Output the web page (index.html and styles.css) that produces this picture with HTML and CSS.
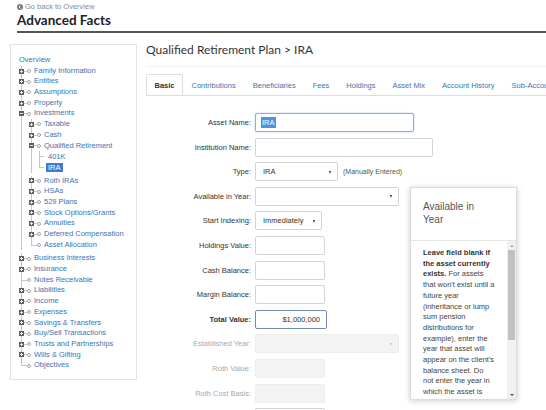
FILE: index.html
```html
<!DOCTYPE html>
<html>
<head>
<meta charset="utf-8">
<link rel="stylesheet" href="styles.css">
</head>
<body>
<div class="top">
  <a class="back" href="#"><svg width="6" height="6" viewBox="0 0 6 6"><circle cx="3" cy="3" r="3" fill="#7a7a7a"/><path d="M3.6 1.5 L2 3 L3.6 4.5" stroke="#fff" stroke-width="1" fill="none"/></svg>Go back to Overview</a>
  <h1 class="page-title">Advanced Facts</h1>
</div>
<div class="rule"></div>
<div class="layout">
  <aside class="side">
    <div class="overview">Overview</div>
    <ul class="tree">
      <li><span class="node"><i class="exp plus"></i><i class="conn"></i><i class="dot"></i><span class="lbl">Family Information</span></span></li>
      <li><span class="node"><i class="exp plus"></i><i class="conn"></i><i class="dot"></i><span class="lbl">Entities</span></span></li>
      <li><span class="node"><i class="exp plus"></i><i class="conn"></i><i class="dot"></i><span class="lbl">Assumptions</span></span></li>
      <li><span class="node"><i class="exp plus"></i><i class="conn"></i><i class="dot"></i><span class="lbl">Property</span></span></li>
      <li><span class="node"><i class="exp"></i><i class="conn"></i><i class="dot"></i><span class="lbl">Investments</span></span>
        <ul>
          <li><span class="node"><i class="exp plus"></i><i class="conn"></i><i class="dot"></i><span class="lbl">Taxable</span></span></li>
          <li><span class="node"><i class="exp plus"></i><i class="conn"></i><i class="dot"></i><span class="lbl">Cash</span></span></li>
          <li><span class="node"><i class="exp"></i><i class="conn"></i><i class="dot"></i><span class="lbl">Qualified Retirement</span></span>
            <ul class="leafs">
              <li><span class="node"><i class="elbow"></i><span class="lbl">401K</span></span></li>
              <li><span class="node"><i class="elbow"></i><span class="lbl sel">IRA</span></span></li>
            </ul>
          </li>
          <li><span class="node"><i class="exp plus"></i><i class="conn"></i><i class="dot"></i><span class="lbl">Roth IRAs</span></span></li>
          <li><span class="node"><i class="exp plus"></i><i class="conn"></i><i class="dot"></i><span class="lbl">HSAs</span></span></li>
          <li><span class="node"><i class="exp plus"></i><i class="conn"></i><i class="dot"></i><span class="lbl">529 Plans</span></span></li>
          <li><span class="node"><i class="exp plus"></i><i class="conn"></i><i class="dot"></i><span class="lbl">Stock Options/Grants</span></span></li>
          <li><span class="node"><i class="exp plus"></i><i class="conn"></i><i class="dot"></i><span class="lbl">Annuities</span></span></li>
          <li><span class="node"><i class="exp plus"></i><i class="conn"></i><i class="dot"></i><span class="lbl">Deferred Compensation</span></span></li>
          <li><span class="node"><i class="noexp"></i><i class="conn"></i><i class="dot"></i><span class="lbl">Asset Allocation</span></span></li>
        </ul>
      </li>
      <li><span class="node"><i class="exp plus"></i><i class="conn"></i><i class="dot"></i><span class="lbl">Business Interests</span></span></li>
      <li><span class="node"><i class="exp plus"></i><i class="conn"></i><i class="dot"></i><span class="lbl">Insurance</span></span></li>
      <li><span class="node"><i class="noexp"></i><i class="conn"></i><i class="dot"></i><span class="lbl">Notes Receivable</span></span></li>
      <li><span class="node"><i class="exp plus"></i><i class="conn"></i><i class="dot"></i><span class="lbl">Liabilities</span></span></li>
      <li><span class="node"><i class="exp plus"></i><i class="conn"></i><i class="dot"></i><span class="lbl">Income</span></span></li>
      <li><span class="node"><i class="exp plus"></i><i class="conn"></i><i class="dot"></i><span class="lbl">Expenses</span></span></li>
      <li><span class="node"><i class="exp plus"></i><i class="conn"></i><i class="dot"></i><span class="lbl">Savings &amp; Transfers</span></span></li>
      <li><span class="node"><i class="exp plus"></i><i class="conn"></i><i class="dot"></i><span class="lbl">Buy/Sell Transactions</span></span></li>
      <li><span class="node"><i class="exp plus"></i><i class="conn"></i><i class="dot"></i><span class="lbl">Trusts and Partnerships</span></span></li>
      <li><span class="node"><i class="exp plus"></i><i class="conn"></i><i class="dot"></i><span class="lbl">Wills &amp; Gifting</span></span></li>
      <li><span class="node"><i class="noexp"></i><i class="conn"></i><i class="dot"></i><span class="lbl">Objectives</span></span></li>
    </ul>
  </aside>
  <main class="main">
    <h2 class="main-title">Qualified Retirement Plan &gt; IRA</h2>
    <nav class="tabs">
      <span class="tab active">Basic</span>
      <span class="tab">Contributions</span>
      <span class="tab">Beneficiaries</span>
      <span class="tab">Fees</span>
      <span class="tab">Holdings</span>
      <span class="tab">Asset Mix</span>
      <span class="tab">Account History</span>
      <span class="tab">Sub-Accou</span>
    </nav>
    <div class="form">
      <label class="lab">Asset Name:</label>
      <div class="ctl"><div class="field focus w-asset"><span class="selected">IRA</span></div></div>

      <label class="lab">Institution Name:</label>
      <div class="ctl"><div class="field w-inst"></div></div>

      <label class="lab">Type:</label>
      <div class="ctl"><div class="field select w-type">IRA<i class="caret"></i></div><span class="note">(Manually Entered)</span></div>

      <label class="lab">Available in Year:</label>
      <div class="ctl"><div class="field select w-year"><i class="caret"></i></div></div>

      <label class="lab">Start Indexing:</label>
      <div class="ctl"><div class="field select w-start">Immediately<i class="caret"></i></div></div>

      <label class="lab">Holdings Value:</label>
      <div class="ctl"><div class="field w-num"></div></div>

      <label class="lab">Cash Balance:</label>
      <div class="ctl"><div class="field w-num"></div></div>

      <label class="lab">Margin Balance:</label>
      <div class="ctl"><div class="field w-num"></div></div>

      <label class="lab strong">Total Value:</label>
      <div class="ctl"><div class="field total w-total">$1,000,000</div></div>

      <label class="lab off">Established Year:</label>
      <div class="ctl"><div class="field select disabled w-year"><i class="caret"></i></div></div>

      <label class="lab off">Roth Value:</label>
      <div class="ctl"><div class="field disabled w-num"></div></div>

      <label class="lab off">Roth Cost Basis:</label>
      <div class="ctl"><div class="field disabled w-num"></div></div>

      <span class="lab"></span>
      <div class="ctl"><div class="field w-num"></div></div>
    </div>

    <div class="pop">
      <div class="pop-title">Available in Year</div>
      <div class="pop-body">
        <div class="pop-text">
          <p><b>Leave field blank if the asset currently exists.</b> For assets that won't exist until a future year (inheritance or lump sum pension distributions for example), enter the year that asset will appear on the client's balance sheet. Do not enter the year in which the asset is acquired if it already exists; leave the field blank instead.</p>
        </div>
        <div class="sbar">
          <i class="sb-up"></i>
          <i class="sb-thumb"></i>
          <i class="sb-fill"></i>
          <i class="sb-down"></i>
        </div>
      </div>
    </div>
  </main>
</div>
</body>
</html>
```
FILE: styles.css
```css
* { box-sizing: border-box; }
html, body { margin: 0; padding: 0; }
body {
  width: 546px;
  height: 410px;
  overflow: hidden;
  background: #fff;
  color: #333;
  font-family: "Liberation Sans", Arial, sans-serif;
}

/* header */
.top { padding: 2px 0 0 17px; }
.back {
  display: flex;
  align-items: center;
  gap: 2px;
  font-size: 7.5px;
  line-height: 9px;
  color: #8a8a8a;
  text-decoration: none;
}
.page-title {
  margin: 1px 0 0;
  font-family: Lato, "Liberation Sans", sans-serif;
  font-weight: 700;
  font-size: 13.5px;
  line-height: 16px;
  color: #222;
}
.rule {
  margin: 3px 0 0 17px;
  height: 2px;
  background: #555;
}

.layout {
  display: flex;
  align-items: flex-start;
  padding-left: 10px;
  gap: 9px;
}

/* sidebar tree */
.side {
  flex: none;
  width: 127px;
  margin-top: 11px;
  border: 1px solid #e2e2e2;
  padding: 10px 0 8px 8px;
  font-size: 7.5px;
  color: #3d73b0;
}
.overview { line-height: 10.7px; height: 10.7px; }
.tree, .tree ul { list-style: none; margin: 0; padding: 0; }
.tree ul { margin: 0 0 3px 10px; }
.tree ul.leafs { margin-left: 8px; }
.tree li { position: relative; }
.tree li::before {
  content: "";
  position: absolute;
  left: 2px;
  top: 0;
  bottom: 0;
  border-left: 1px solid #c6c6c6;
}
.tree li:last-child::before { bottom: auto; height: 5.5px; }
.node {
  position: relative;
  z-index: 1;
  display: flex;
  align-items: center;
  height: 10.7px;
  white-space: nowrap;
}
.exp {
  flex: none;
  position: relative;
  width: 5px;
  height: 5px;
  background: #5e5e5e;
}
.exp::before {
  content: "";
  position: absolute;
  left: 1px; top: 2px;
  width: 3px; height: 1px;
  background: #e8e8e8;
}
.exp.plus::after {
  content: "";
  position: absolute;
  left: 2px; top: 1px;
  width: 1px; height: 3px;
  background: #e8e8e8;
}
.noexp {
  flex: none;
  width: 3px;
  height: 1px;
  margin-left: 2px;
  background: #c6c6c6;
}
.conn {
  flex: none;
  width: 3px;
  height: 1px;
  background: #c6c6c6;
}
.dot {
  flex: none;
  width: 4px;
  height: 4px;
  border: 1px solid #9aa6b4;
  border-radius: 50%;
  background: #fff;
}
.lbl { margin-left: 3px; line-height: 10.7px; }
.elbow {
  flex: none;
  width: 5px;
  height: 1px;
  margin-left: 2px;
  background: #c6c6c6;
}
.leafs .lbl { margin-left: 2px; padding: 0 2px; line-height: 9px; }
.lbl.sel { background: #3f7ccc; color: #fff; }

/* main */
.main {
  flex: 1;
  position: relative;
  min-width: 0;
}
.main-title {
  margin: 9px 0 0;
  padding-bottom: 8px;
  border-bottom: 1px solid #efefef;
  font-family: Lato, "Liberation Sans", sans-serif;
  font-weight: 400;
  font-size: 12px;
  line-height: 16px;
  color: #333;
}
.tabs {
  display: flex;
  margin-top: 7px;
  height: 22px;
  border-bottom: 1px solid #ddd;
  white-space: nowrap;
  overflow: hidden;
}
.tab {
  flex: none;
  padding: 0 7.5px;
  font-size: 7.5px;
  line-height: 21px;
  color: #3d73b0;
  border: 1px solid transparent;
  border-bottom: none;
}
.tab.active {
  border-color: #ddd;
  border-radius: 2px 2px 0 0;
  background: #fff;
  color: #333;
  font-weight: bold;
  height: 22px;
}

/* form */
.form {
  display: grid;
  grid-template-columns: 105px auto;
  column-gap: 4px;
  row-gap: 5.6px;
  align-items: center;
  padding-top: 17px;
}
.lab {
  text-align: right;
  font-size: 7.5px;
  color: #333;
  white-space: nowrap;
}
.lab.strong { font-weight: bold; }
.lab.off { color: #a8a8a8; }
.ctl {
  display: flex;
  align-items: center;
  gap: 5px;
}
.field {
  position: relative;
  height: 19px;
  border: 1px solid #d4d4d4;
  border-radius: 2px;
  background: #fff;
  padding: 0 7px;
  font-size: 7.5px;
  line-height: 17px;
  color: #333;
  white-space: nowrap;
}
.field.focus {
  border-color: #7fb2e6;
  box-shadow: 0 0 2px rgba(102, 175, 233, 0.6);
  padding-left: 5px;
}
.selected {
  background: #4f93e0;
  color: #fff;
  padding: 1px 1px;
}
.field.total {
  border-color: #6e8db5;
  text-align: right;
  padding-right: 6px;
}
.field.disabled {
  background: #f3f3f3;
  border-color: #ededed;
}
.caret {
  position: absolute;
  right: 6px;
  top: 7.5px;
  width: 0;
  height: 0;
  border-left: 1.5px solid transparent;
  border-right: 1.5px solid transparent;
  border-top: 3px solid #333;
}
.disabled .caret { border-top-color: #c4c4c4; }
.note { font-size: 7px; color: #555; }

.w-asset { width: 159px; }
.w-inst { width: 178px; }
.w-type { width: 83px; }
.w-year { width: 144px; }
.w-start { width: 67px; }
.w-num { width: 70px; }
.w-total { width: 72px; }

/* popover */
.pop {
  position: absolute;
  left: 264px;
  top: 154px;
  width: 107px;
  height: 213px;
  display: flex;
  flex-direction: column;
  background: #fff;
  border: 1px solid #dcdcdc;
  box-shadow: 0 1px 6px rgba(0, 0, 0, 0.2);
  z-index: 5;
}
.pop-title {
  flex: none;
  padding: 12px 22px 14px 12px;
  font-size: 10px;
  line-height: 13px;
  color: #555;
  border-bottom: 1px solid #e6e6e6;
}
.pop-body {
  flex: 1;
  min-height: 0;
  display: flex;
}
.pop-text {
  flex: 1;
  overflow: hidden;
  padding: 7px 12px 0 12px;
  font-size: 7.5px;
  line-height: 10.7px;
  color: #444;
}
.pop-text p { margin: 0; }
.pop-text b { color: #333; }
.sbar {
  flex: none;
  width: 9px;
  display: flex;
  flex-direction: column;
  background: #f1f1f1;
}
.sb-up, .sb-down {
  flex: none;
  height: 9px;
  display: flex;
  align-items: center;
  justify-content: center;
}
.sb-up::before, .sb-down::before {
  content: "";
  width: 0;
  height: 0;
  border-left: 2px solid transparent;
  border-right: 2px solid transparent;
}
.sb-up::before { border-bottom: 2.5px solid #a3a3a3; }
.sb-down::before { border-top: 2.5px solid #505050; }
.sb-thumb {
  flex: none;
  height: 90px;
  margin: 0 1px;
  background: #c1c1c1;
}
.sb-fill { flex: 1; }
```
